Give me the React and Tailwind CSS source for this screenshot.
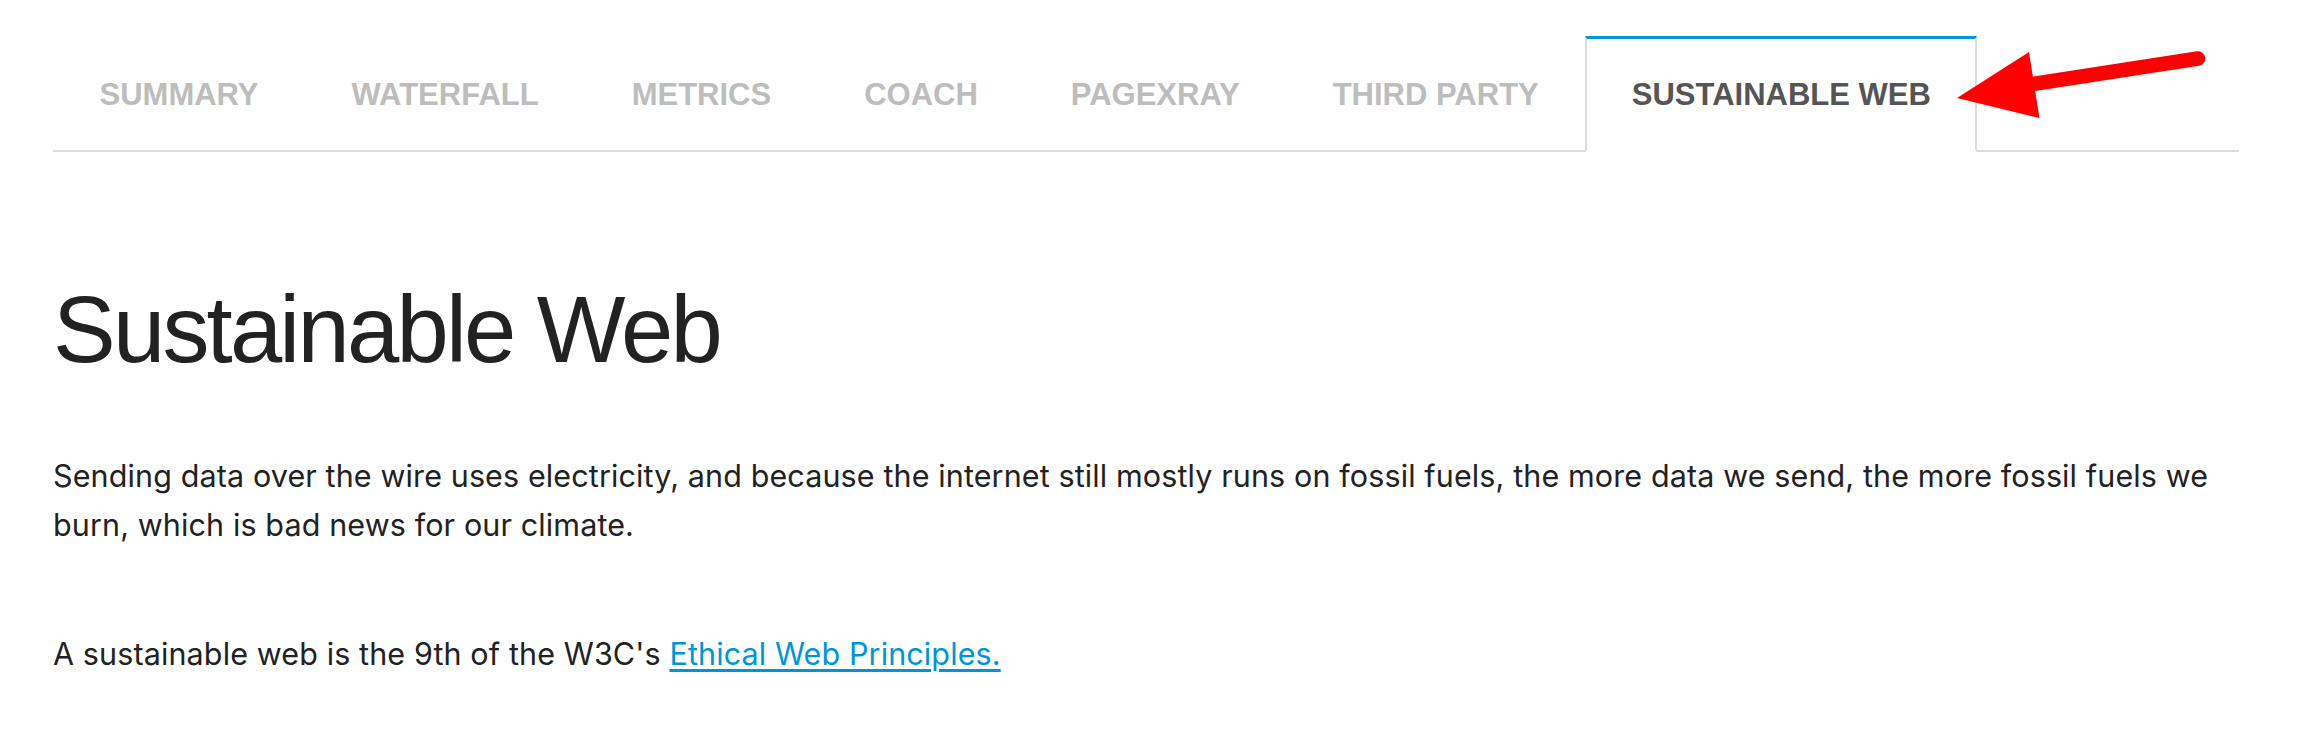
const tabs = [
  "SUMMARY",
  "WATERFALL",
  "METRICS",
  "COACH",
  "PAGEXRAY",
  "THIRD PARTY",
  "SUSTAINABLE WEB",
];

function Tab({ label, active }) {
  return (
    <li
      className={
        "-mb-[2px] border-x-2 border-t-[3px] border-b-2 px-[44.5px] pt-[37px] pb-[36px] text-[31px] leading-[38px] font-bold whitespace-nowrap " +
        (active
          ? "border-x-[#dddddd] border-t-[#0095d6] border-b-white text-[#555555]"
          : "border-transparent text-[#bdbdbd]")
      }
    >
      {label}
    </li>
  );
}

export default function App() {
  return (
    <div className="relative min-h-screen bg-white font-['Liberation_Sans',Arial,sans-serif]">
      <div className="pl-[53px] pr-[81px] pt-[36px]">
        {/* Tabs */}
        <ul className="flex border-b-2 border-[#dddddd]">
          {tabs.map((t) => (
            <Tab key={t} label={t} active={t === "SUSTAINABLE WEB"} />
          ))}
        </ul>

        {/* Content */}
        <h1 className="mt-[121px] text-[94px] leading-[114px] tracking-[-2.8px] text-[#222222]">
          Sustainable Web
        </h1>
        <div className="font-['Inter',sans-serif] text-[30.5px] leading-[49px] tracking-[0.12px] text-[#222222]">
          <p className="mt-[64px]">
            Sending data over the wire uses electricity, and because the internet still mostly runs on fossil
            fuels, the more data we send, the more fossil fuels we burn, which is bad news for our climate.
          </p>
          <p className="mt-[80px]">
            A sustainable web is the 9th of the W3C's{" "}
            <a href="#" className="text-[#0095d6] underline underline-offset-[4px]">
              Ethical Web Principles.
            </a>
          </p>
        </div>
      </div>

      {/* Annotation arrow */}
      <svg
        className="pointer-events-none absolute left-0 top-0"
        width="2320"
        height="200"
        viewBox="0 0 2320 200"
      >
        <line x1="2030" y1="84.5" x2="2198" y2="58.5" stroke="#ff0000" strokeWidth="14.5" strokeLinecap="round" />
        <polygon points="1957,98 2029,52 2039.5,118" fill="#ff0000" />
      </svg>
    </div>
  );
}
